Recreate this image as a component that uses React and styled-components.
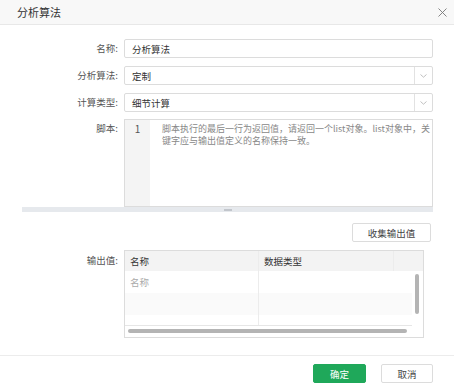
import React from 'react';
import styled, { createGlobalStyle } from 'styled-components';

const GlobalStyle = createGlobalStyle`
  html, body {
    margin: 0;
    padding: 0;
    background: #fff;
  }
  body {
    font-family: "Noto Sans CJK SC", "Noto Sans", sans-serif;
    color: #333;
  }
`;

// dialog frame
const Dialog = styled.div`
  width: 454px;
  height: 391px;
  display: flex;
  flex-direction: column;
  background: #fff;
  box-sizing: border-box;
`;

const Header = styled.div`
  height: 24px;
  flex: none;
  display: flex;
  align-items: center;
  justify-content: space-between;
  padding: 0 7px 0 17px;
  background: #f8f8f8;
  border-bottom: 1px solid #e8e8e8;
`;

const Title = styled.span`
  font-size: 11px;
  color: #333;
`;

const Close = styled.span`
  width: 10px;
  height: 10px;
  display: flex;
  align-items: center;
  justify-content: center;
`;

const Body = styled.div`
  flex: 1;
  display: grid;
  grid-template-columns: 96px 309px;
  column-gap: 6px;
  row-gap: 8px;
  align-content: start;
  padding: 14px 0 0 22px;
`;

const Label = styled.div`
  font-size: 9.5px;
  color: #555;
  text-align: right;
  line-height: ${(p) => p.$lh || '19px'};
`;

const Input = styled.div`
  height: 19px;
  box-sizing: border-box;
  border: 1px solid #dcdcdc;
  border-radius: 2px;
  display: flex;
  align-items: center;
  font-size: 9.5px;
  color: #333;
`;

const InputText = styled.span`
  flex: 1;
  padding-left: 7px;
`;

const Arrow = styled.span`
  width: 17px;
  height: 100%;
  border-left: 1px solid #e2e2e2;
  display: flex;
  align-items: center;
  justify-content: center;
`;

const Editor = styled.div`
  height: 88px;
  box-sizing: border-box;
  border: 1px solid #dcdcdc;
  display: flex;
  margin-top: -1px;
`;

const Gutter = styled.div`
  width: 25px;
  background: #f4f4f4;
  font-size: 10px;
  color: #555;
  text-align: center;
  padding-top: 2px;
  line-height: 14px;
`;

const Code = styled.div`
  flex: 1;
  padding: 3px 0 0 12px;
  font-size: 9px;
  line-height: 12px;
  color: #888;
`;

const Resizer = styled.div`
  grid-column: 1 / 3;
  height: 5px;
  margin-top: -8px;
  background: #e6e9ed;
  display: flex;
  align-items: center;
  justify-content: center;
`;

const Grip = styled.span`
  width: 8px;
  height: 2px;
  background: #c2c6cc;
`;

const ActionRow = styled.div`
  grid-column: 2;
  display: flex;
  justify-content: flex-end;
  padding-right: 2px;
`;

const Button = styled.button`
  height: ${(p) => p.$h || '19px'};
  width: ${(p) => p.$w};
  box-sizing: border-box;
  border: 1px solid ${(p) => (p.$primary ? '#1fa85a' : '#dcdcdc')};
  background: ${(p) => (p.$primary ? '#1fa85a' : '#fff')};
  color: ${(p) => (p.$primary ? '#fff' : '#444')};
  border-radius: 2px;
  font-family: inherit;
  font-size: 9.5px;
  padding: 0;
`;

const Table = styled.div`
  position: relative;
  width: 300px;
  height: 88px;
  box-sizing: border-box;
  border: 1px solid #dcdcdc;
  overflow: hidden;
`;

const Row = styled.div`
  display: grid;
  grid-template-columns: 134px 135px 1fr;
  height: ${(p) => p.$h || '22px'};
  background: ${(p) => p.$bg || '#fff'};
  border-bottom: ${(p) => (p.$line ? '1px solid #e6e6e6' : 'none')};
  margin-right: ${(p) => (p.$head ? '0' : '11px')};
`;

const Cell = styled.div`
  display: flex;
  align-items: center;
  padding-left: 5px;
  font-size: 9.5px;
  color: ${(p) => (p.$muted ? '#aaa' : '#333')};
  border-right: ${(p) => (p.$last ? 'none' : '1px solid #ececec')};
`;

const VThumb = styled.div`
  position: absolute;
  right: 4px;
  top: 23px;
  width: 4px;
  height: 40px;
  border-radius: 2px;
  background: #b4b4b4;
`;

const HThumb = styled.div`
  position: absolute;
  left: 3px;
  bottom: 4px;
  width: 279px;
  height: 4px;
  border-radius: 2px;
  background: #b4b4b4;
`;

const Footer = styled.div`
  height: 35px;
  flex: none;
  border-top: 1px solid #ececec;
  display: flex;
  align-items: center;
  justify-content: flex-end;
  gap: 15px;
  padding-right: 21px;
`;

const Chevron = () => (
  <svg width="7" height="4" viewBox="0 0 7 4">
    <path d="M0.5 0.5 L3.5 3.2 L6.5 0.5" fill="none" stroke="#b0b0b0" strokeWidth="0.8" />
  </svg>
);

export default function App() {
  return (
    <>
      <GlobalStyle />
      <Dialog>
        <Header>
          <Title>分析算法</Title>
          <Close>
            <svg width="9" height="9" viewBox="0 0 9 9">
              <path d="M0.5 0.5 L8.5 8.5 M8.5 0.5 L0.5 8.5" stroke="#777" strokeWidth="0.9" />
            </svg>
          </Close>
        </Header>
        <Body>
          <Label>名称:</Label>
          <Input>
            <InputText>分析算法</InputText>
          </Input>

          <Label>分析算法:</Label>
          <Input>
            <InputText>定制</InputText>
            <Arrow><Chevron /></Arrow>
          </Input>

          <Label>计算类型:</Label>
          <Input>
            <InputText>细节计算</InputText>
            <Arrow><Chevron /></Arrow>
          </Input>

          <Label $lh="16px">脚本:</Label>
          <Editor>
            <Gutter>1</Gutter>
            <Code>脚本执行的最后一行为返回值，请返回一个list对象。list对象中，关键字应与输出值定义的名称保持一致。</Code>
          </Editor>
          <Resizer><Grip /></Resizer>

          <ActionRow>
            <Button $w="79px">收集输出值</Button>
          </ActionRow>

          <Label $lh="20px">输出值:</Label>
          <Table>
            <Row $head $h="20px" $bg="#f3f3f3">
              <Cell>名称</Cell>
              <Cell>数据类型</Cell>
              <Cell $last />
            </Row>
            <Row>
              <Cell $muted>名称</Cell>
              <Cell $last />
            </Row>
            <Row $bg="#fafafa">
              <Cell />
              <Cell $last />
            </Row>
            <Row $h="10px" $line>
              <Cell />
              <Cell $last />
            </Row>
            <VThumb />
            <HThumb />
          </Table>
        </Body>
        <Footer>
          <Button $primary $w="53px">确定</Button>
          <Button $w="52px">取消</Button>
        </Footer>
      </Dialog>
    </>
  );
}
